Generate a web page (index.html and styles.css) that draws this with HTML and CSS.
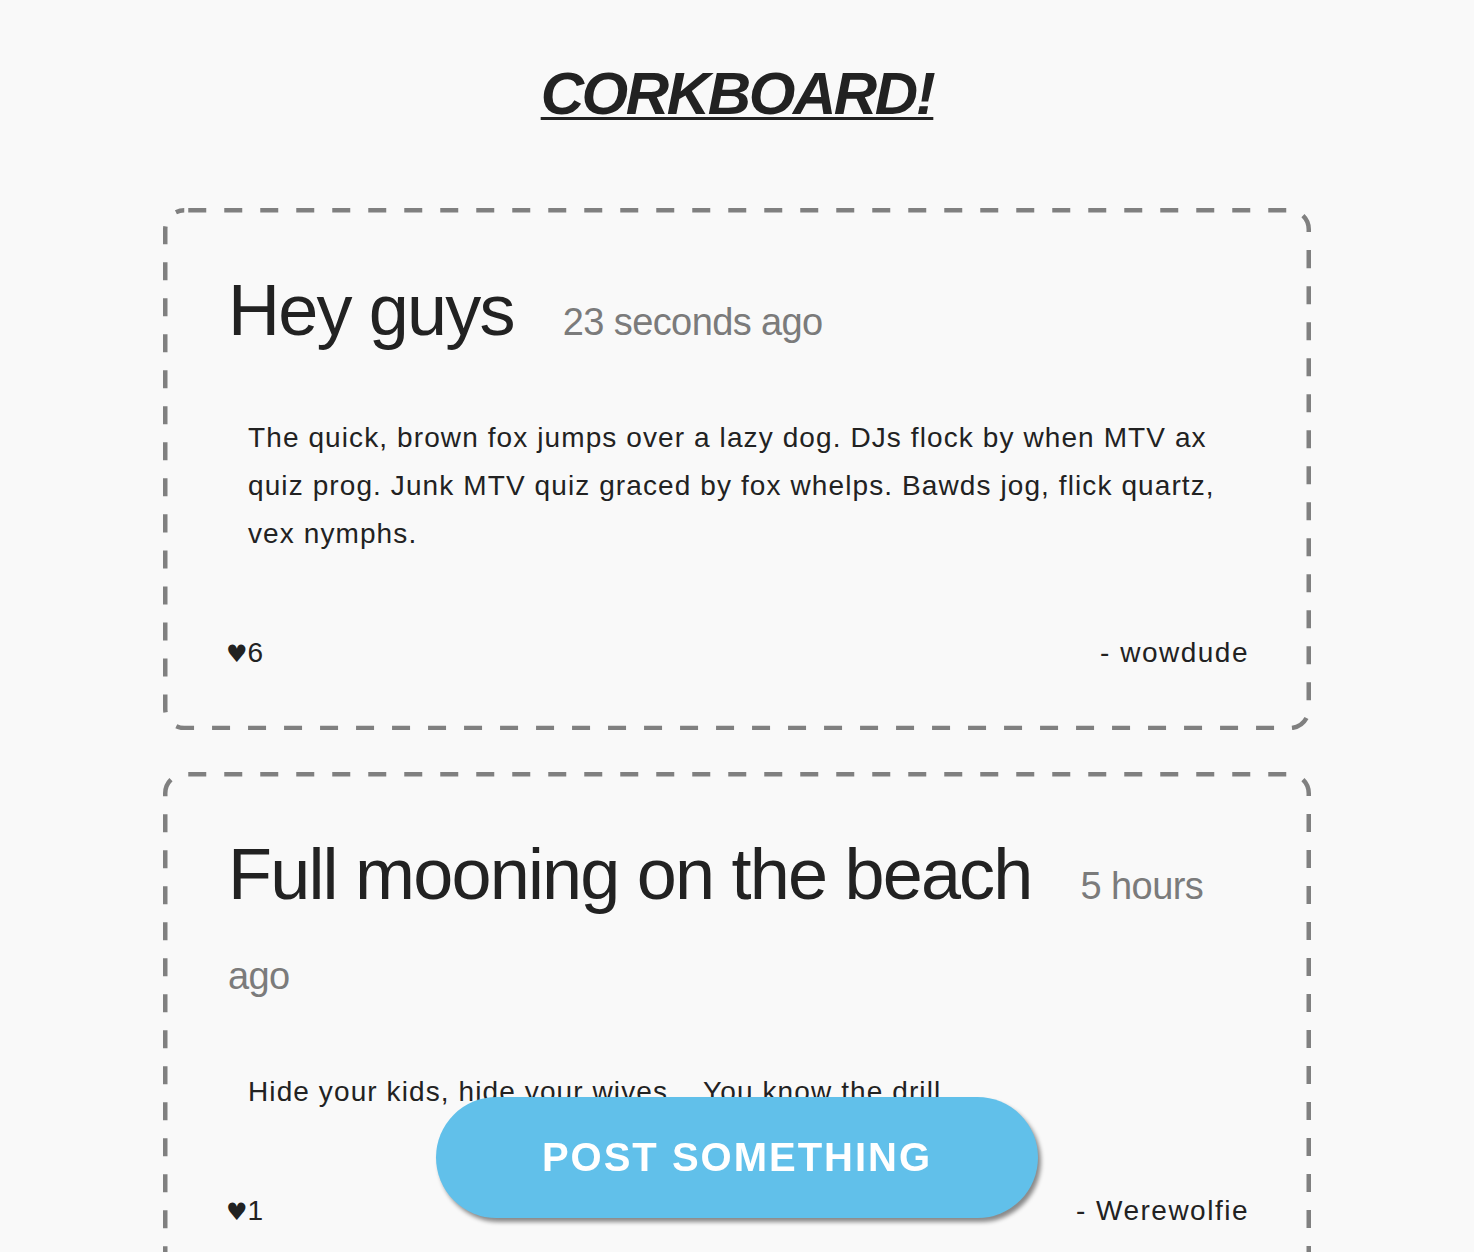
FILE: index.html
```html
<!DOCTYPE html>
<html lang="en">
<head>
<meta charset="utf-8">
<title>Corkboard</title>
<link rel="stylesheet" href="styles.css">
</head>
<body>
<header class="site-header">
  <h1 class="site-title">CORKBOARD!</h1>
</header>
<main class="board">
  <article class="post">
    <h2 class="post-title">Hey guys<span class="post-time">23 seconds ago</span></h2>
    <p class="post-body">The quick, brown fox jumps over a lazy dog. DJs flock by when MTV ax quiz prog. Junk MTV quiz graced by fox whelps. Bawds jog, flick quartz, vex nymphs.</p>
    <footer class="post-footer">
      <span class="likes"><span class="heart">&#9829;</span>6</span>
      <span class="author">- wowdude</span>
    </footer>
  </article>
  <article class="post">
    <h2 class="post-title">Full mooning on the beach<span class="post-time">5 hours ago</span></h2>
    <p class="post-body">Hide your kids, hide your wives... You know the drill.</p>
    <footer class="post-footer">
      <span class="likes"><span class="heart">&#9829;</span>1</span>
      <span class="author">- Werewolfie</span>
    </footer>
  </article>
</main>
<button class="post-button" type="button">POST SOMETHING</button>
</body>
</html>
```
FILE: styles.css
```css
html, body {
  margin: 0;
  padding: 0;
}
body {
  background: #f9f9f9;
  color: #222222;
  font-family: "Liberation Sans", Arial, "DejaVu Sans", sans-serif;
}
.site-header {
  padding-top: 59px;
  text-align: center;
}
.site-title {
  margin: 0;
  font-size: 60px;
  line-height: 70px;
  font-weight: 700;
  font-style: italic;
  letter-spacing: -2.4px;
  text-decoration: underline;
  text-decoration-thickness: 3px;
  text-underline-offset: 3px;
}
.board {
  display: flex;
  flex-direction: column;
  gap: 42px;
  align-items: center;
  padding-top: 79px;
  padding-bottom: 200px;
}
.post {
  box-sizing: border-box;
  width: 1148px;
  padding: 57px 62px 52px 65px;
  background-image: url("data:image/svg+xml,%3Csvg xmlns='http://www.w3.org/2000/svg'%3E%3Crect x='2.25' y='2.25' rx='19' ry='19' style='width:calc(100%25 - 4.5px);height:calc(100%25 - 4.5px)' fill='none' stroke='%23808080' stroke-width='4.5' stroke-dasharray='18 18' stroke-dashoffset='-4'/%3E%3C/svg%3E");
  background-size: 100% 100%;
  background-repeat: no-repeat;
}
.post-title {
  margin: 0;
  font-size: 72px;
  line-height: 1.26;
  font-weight: 400;
  letter-spacing: -1.8px;
}
.post-time {
  margin-left: 49px;
  font-size: 38px;
  letter-spacing: -0.6px;
  color: #7b7b7b;
}
.post-body {
  margin: 58px 0 0;
  padding: 0 20px;
  font-size: 28px;
  line-height: 48px;
  letter-spacing: 1.1px;
}
.post-footer {
  display: flex;
  justify-content: space-between;
  margin-top: 71px;
  font-size: 28px;
  line-height: 48px;
}
.likes {
  margin-left: -2px;
}
.author {
  letter-spacing: 1.5px;
}
.heart {
  font-family: "DejaVu Sans", sans-serif;
  font-size: 24px;
}
.post-button {
  position: fixed;
  left: 50%;
  bottom: 34px;
  transform: translateX(-50%);
  width: 602px;
  height: 121px;
  border: none;
  border-radius: 61px;
  background: #61c0ea;
  color: #ffffff;
  font-family: "Liberation Sans", Arial, sans-serif;
  font-size: 40px;
  font-weight: 700;
  letter-spacing: 2px;
  box-shadow: 3px 4px 4px rgba(0, 0, 0, 0.45);
  cursor: pointer;
}
```
